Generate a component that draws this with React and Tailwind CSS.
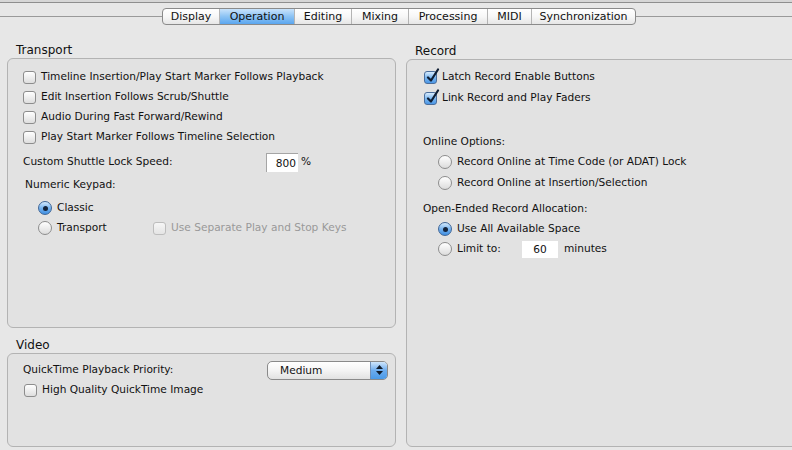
import React from 'react';

const font = "font-['DejaVu_Sans',sans-serif]";

function Check({ checked, disabled }) {
  return (
    <span
      className={
        'relative inline-block w-[13px] h-[13px] shrink-0 rounded-[3px] border ' +
        (checked
          ? 'border-[#4b6e9c] bg-linear-to-b from-[#d8ecfd] via-[#7db8f0] to-[#4b97e6]'
          : disabled
          ? 'border-[#bdbdbd] bg-linear-to-b from-[#f6f6f6] to-[#e4e4e4]'
          : 'border-[#8d8d8d] bg-linear-to-b from-white to-[#dedede]')
      }
    >
      {checked && (
        <svg className="absolute left-[1px] top-[-4px]" width="14" height="15" viewBox="0 0 14 15">
          <path d="M2 9.5 L5 12.5 L12 1.5" fill="none" stroke="#0f1e33" strokeWidth="2.2" strokeLinecap="round" strokeLinejoin="round" />
        </svg>
      )}
    </span>
  );
}

function Radio({ checked }) {
  return (
    <span
      className={
        'relative inline-flex items-center justify-center w-[14px] h-[14px] shrink-0 rounded-full border ' +
        (checked
          ? 'border-[#3f6697] bg-linear-to-b from-[#d6ebfd] via-[#76b3ef] to-[#3f8fe2]'
          : 'border-[#8d8d8d] bg-linear-to-b from-white to-[#dcdcdc]')
      }
    >
      {checked && <span className="block w-[5px] h-[5px] rounded-full bg-[#14233a]" />}
    </span>
  );
}

function CheckRow({ label, checked, className = '' }) {
  return (
    <div className={'flex items-center h-[20px] ' + className}>
      <Check checked={checked} />
      <span className="ml-[5px]">{label}</span>
    </div>
  );
}

function RadioRow({ label, checked, className = '' }) {
  return (
    <div className={'flex items-center h-[20px] pl-[15px] ' + className}>
      <Radio checked={checked} />
      <span className="ml-[5px]">{label}</span>
    </div>
  );
}

function Popup({ value }) {
  return (
    <div className="flex w-[121px] h-[19px] rounded-[5px] border border-[#8a8a8a] bg-linear-to-b from-white via-[#f4f4f4] to-[#e2e2e2] overflow-hidden">
      <span className="flex-1 pl-[12px] leading-[17px]">{value}</span>
      <span className="flex flex-col items-center justify-center gap-[2px] w-[17px] border-l border-[#6f8fb8] bg-linear-to-b from-[#cfe6fc] via-[#6cacee] to-[#4a9ae8]">
        <svg width="7" height="4" viewBox="0 0 7 4"><path d="M3.5 0 L7 4 L0 4 Z" fill="#101c2c" /></svg>
        <svg width="7" height="4" viewBox="0 0 7 4"><path d="M0 0 L7 0 L3.5 4 Z" fill="#101c2c" /></svg>
      </span>
    </div>
  );
}

const tabs = [
  { name: 'Display', w: 'w-[56px]' },
  { name: 'Operation', w: 'w-[75px]', active: true },
  { name: 'Editing', w: 'w-[57px]' },
  { name: 'Mixing', w: 'w-[57px]' },
  { name: 'Processing', w: 'w-[79px]' },
  { name: 'MIDI', w: 'w-[44px]' },
  { name: 'Synchronization', w: 'w-[104px]' },
];

export default function App() {
  return (
    <div className={'w-[792px] h-[450px] overflow-hidden bg-[#e7e7e7] text-[10.6px] text-[#111] ' + font}>
      {/* window top edge */}
      <div className="h-[2px] bg-[#d6d6d6]" />
      <div className="h-px bg-[#8e8e8e]" />

      {/* tab control */}
      <div className="flex items-center mt-[5px] h-[17px]">
        <div className="w-[162px] h-px bg-[#9a9a9a]" />
        <div className="flex h-[17px] rounded-[4px] border border-[#8a8a8a] bg-linear-to-b from-white via-[#f7f7f7] to-[#e6e6e6] overflow-hidden text-[11px]">
          {tabs.map((t, i) => (
            <div
              key={t.name}
              className={
                'flex items-center justify-center pt-[2px] ' + t.w + ' ' +
                (i > 0 ? 'border-l border-[#b4b4b4] ' : '') +
                (t.active ? 'bg-linear-to-b from-[#c9e3fb] via-[#8cc3f4] to-[#5aa6ef]' : '')
              }
            >
              {t.name}
            </div>
          ))}
        </div>
        <div className="flex-1 h-px bg-[#9a9a9a]" />
      </div>

      <div className="flex gap-[10px] pl-[7px] mt-[17px]">
        {/* left column */}
        <div className="w-[389px] shrink-0">
          <div className="h-[16px] leading-[16px] pl-[9px] text-[12px]">Transport</div>
          <div className="h-[270px] rounded-[6px] border border-[#b3b3b3] bg-[#e2e2e2] pl-[15px] pt-[8px]">
            <CheckRow label="Timeline Insertion/Play Start Marker Follows Playback" />
            <CheckRow label="Edit Insertion Follows Scrub/Shuttle" />
            <CheckRow label="Audio During Fast Forward/Rewind" />
            <CheckRow label="Play Start Marker Follows Timeline Selection" />
            <div className="flex items-center h-[20px] mt-[5px]">
              <span className="w-[243px]">Custom Shuttle Lock Speed:</span>
              <span className="w-[32px] h-[19px] bg-white border-t border-l border-[#a5a5a5] text-right pr-[2px] leading-[18px]">800</span>
              <span className="ml-[3px]">%</span>
            </div>
            <div className="h-[16px] leading-[16px] mt-[4px] pl-[2px]">Numeric Keypad:</div>
            <RadioRow label="Classic" checked className="mt-[6px]" />
            <div className="flex items-center">
              <RadioRow label="Transport" className="w-[130px]" />
              <Check disabled />
              <span className="ml-[5px] text-[#999]">Use Separate Play and Stop Keys</span>
            </div>
          </div>

          <div className="h-[16px] leading-[16px] pl-[9px] mt-[9px] text-[12px]">Video</div>
          <div className="h-[94px] rounded-[6px] border border-[#b3b3b3] bg-[#e2e2e2] pl-[15px] pt-[6px]">
            <div className="flex items-center h-[20px]">
              <span className="w-[244px]">QuickTime Playback Priority:</span>
              <Popup value="Medium" />
            </div>
            <CheckRow label="High Quality QuickTime Image" className="pl-[1px]" />
          </div>
        </div>

        {/* right column */}
        <div className="w-[400px] shrink-0 pt-[1px]">
          <div className="h-[16px] leading-[16px] pl-[9px] text-[12px]">Record</div>
          <div className="h-[388px] rounded-[6px] border border-[#b3b3b3] bg-[#e2e2e2] pl-[16px] pt-[7px]">
            <CheckRow label="Latch Record Enable Buttons" checked className="pl-[1px]" />
            <CheckRow label="Link Record and Play Faders" checked className="pl-[1px] mt-[1px]" />
            <div className="h-[16px] leading-[16px] mt-[25px]">Online Options:</div>
            <RadioRow label="Record Online at Time Code (or ADAT) Lock" className="mt-[3px]" />
            <RadioRow label="Record Online at Insertion/Selection" className="mt-[1px]" />
            <div className="h-[16px] leading-[16px] mt-[7px]">Open-Ended Record Allocation:</div>
            <RadioRow label="Use All Available Space" checked className="mt-[3px]" />
            <div className="flex items-center h-[20px] pl-[15px]">
              <Radio />
              <span className="ml-[5px] w-[65px]">Limit to:</span>
              <span className="w-[36px] h-[17px] bg-white text-center leading-[17px]">60</span>
              <span className="ml-[6px]">minutes</span>
            </div>
          </div>
        </div>
      </div>
    </div>
  );
}
